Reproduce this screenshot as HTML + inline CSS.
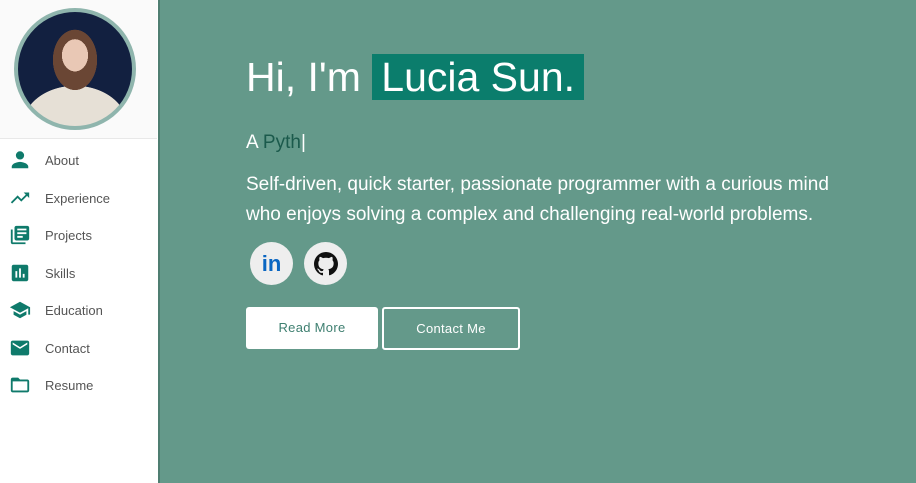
<!DOCTYPE html>
<html><head><style>
body{margin:0;width:916px;height:483px;overflow:hidden;font-family:"Liberation Sans",sans-serif;background:#fff;position:relative}
.side{position:absolute;left:0;top:0;width:157px;height:483px;background:#fff}
.top{height:138px;background:#fafafa;border-bottom:1px solid #e8e8e8}
.av{position:absolute;left:14px;top:8px;width:114px;height:114px;border-radius:50%;border:4px solid #8fb5ad;background:radial-gradient(ellipse 13px 16px at 50% 38%,#e9c8b5 0 100%,transparent 101%),radial-gradient(ellipse 22px 30px at 50% 42%,#6a4634 0 100%,transparent 101%),radial-gradient(ellipse 52px 40px at 50% 100%,#e6e0d6 0 100%,transparent 101%),#122040;overflow:hidden}
.main{position:absolute;left:158px;top:0;width:758px;height:483px;background:#64998a;border-left:2px solid #4f7e71}
.item{position:absolute;left:0;height:20px;font-size:13px;color:#555;display:flex;align-items:center}
.item svg{position:absolute;left:9px;width:22px;height:22px;fill:#0f7a6b}
.item span{position:absolute;left:45px}
</style></head><body>
<div class="side"><div class="top"></div><div class="av"></div>
<div class="item" style="top:150px"><svg viewBox="0 0 24 24"><circle cx="12" cy="7" r="4.5"/><path d="M3 21v-2c0-3 6-5 9-5s9 2 9 5v2z"/></svg><span>About</span></div>
<div class="item" style="top:188px"><svg viewBox="0 0 24 24"><path d="M16 6l2.3 2.3-4.9 4.9-4-4L2 16.6 3.4 18l6-6 4 4 6.3-6.3L22 12V6z"/></svg><span>Experience</span></div>
<div class="item" style="top:225px"><svg viewBox="0 0 24 24"><path d="M4 6H2v14c0 1.1.9 2 2 2h14v-2H4zm16-4H8c-1.1 0-2 .9-2 2v12c0 1.1.9 2 2 2h12c1.1 0 2-.9 2-2V4c0-1.1-.9-2-2-2zm-1 9H9V9h10zm-4 4H9v-2h6zm4-8H9V5h10z"/></svg><span>Projects</span></div>
<div class="item" style="top:263px"><svg viewBox="0 0 24 24"><path d="M19 3H5c-1.1 0-2 .9-2 2v14c0 1.1.9 2 2 2h14c1.1 0 2-.9 2-2V5c0-1.1-.9-2-2-2zM9 17H7v-7h2zm4 0h-2V7h2zm4 0h-2v-4h2z"/></svg><span>Skills</span></div>
<div class="item" style="top:300px"><svg viewBox="0 0 24 24"><path d="M5 13.2v4L12 21l7-3.8v-4L12 17zM12 3 1 9l11 6 9-4.9V17h2V9z"/></svg><span>Education</span></div>
<div class="item" style="top:338px"><svg viewBox="0 0 24 24"><path d="M20 4H4c-1.1 0-2 .9-2 2v12c0 1.1.9 2 2 2h16c1.1 0 2-.9 2-2V6c0-1.1-.9-2-2-2zm0 4-8 5-8-5V6l8 5 8-5z"/></svg><span>Contact</span></div>
<div class="item" style="top:375px"><svg viewBox="0 0 24 24"><path d="M20 6h-8l-2-2H4c-1.1 0-2 .9-2 2v12c0 1.1.9 2 2 2h16c1.1 0 2-.9 2-2V8c0-1.1-.9-2-2-2zm0 12H4V8h16z"/></svg><span>Resume</span></div>
</div>
<div class="main">
<div style="position:absolute;left:86px;top:50px;font-size:41px;color:#fff;line-height:54px;white-space:nowrap">Hi, I'm <span style="background:#0b7d6c;padding:0 9px">Lucia Sun.</span></div>
<div style="position:absolute;left:86px;top:132px;font-size:19px;color:#fff">A <span style="color:#1b5a4c">Pyth</span>|</div>
<div style="position:absolute;left:86px;top:170px;font-size:19px;color:#fff;line-height:30px;width:600px">Self-driven, quick starter, passionate programmer with a curious mind who enjoys solving a complex and challenging real-world problems.</div>
<div style="position:absolute;left:90px;top:242px;width:43px;height:43px;border-radius:50%;background:#eee;text-align:center;line-height:43px;font-weight:bold;font-size:22px;color:#0a66c2">in</div>
<div style="position:absolute;left:144px;top:242px;width:43px;height:43px;border-radius:50%;background:#eee"><svg viewBox="0 0 16 16" width="24" height="24" style="margin:10px"><path fill="#111" d="M8 0C3.6 0 0 3.6 0 8c0 3.5 2.3 6.5 5.5 7.6.4.1.5-.2.5-.4v-1.4c-2.2.5-2.7-1-2.7-1-.4-.9-.9-1.2-.9-1.2-.7-.5.1-.5.1-.5.8.1 1.2.8 1.2.8.7 1.2 1.9.9 2.3.7.1-.5.3-.9.5-1.1-1.8-.2-3.6-.9-3.6-4 0-.9.3-1.6.8-2.1-.1-.2-.4-1 .1-2.1 0 0 .7-.2 2.2.8.6-.2 1.3-.3 2-.3s1.4.1 2 .3c1.5-1 2.2-.8 2.2-.8.4 1.1.2 1.9.1 2.1.5.6.8 1.3.8 2.1 0 3.1-1.9 3.7-3.6 3.9.3.3.5.8.5 1.5v2.2c0 .2.1.5.6.4C13.7 14.5 16 11.5 16 8c0-4.4-3.6-8-8-8z"/></svg></div>
<div style="position:absolute;left:86px;top:307px;width:132px;height:42px;background:#fff;border-radius:3px;color:#3e7f70;font-size:13px;text-align:center;line-height:42px;letter-spacing:.3px">Read More</div>
<div style="position:absolute;left:222px;top:307px;width:134px;height:39px;border:2px solid #fff;border-radius:3px;color:#fff;font-size:13px;text-align:center;line-height:39px;letter-spacing:.3px">Contact Me</div>
</div>
</body></html>
